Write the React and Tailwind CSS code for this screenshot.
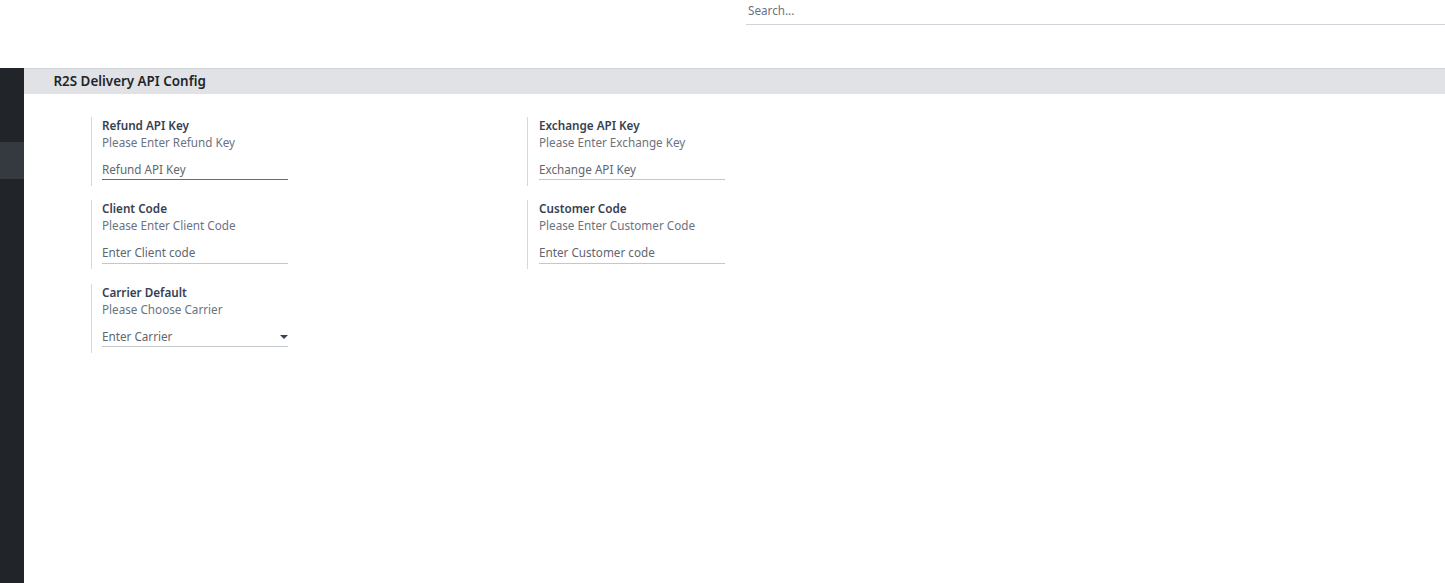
import React from "react";

const Setting = ({ title, help, value, active, select, right }) => {
  return (
    <div className={"w-[436px] h-[69px] border-l border-[#d5d8dc] " + (right ? "pl-[11px]" : "pl-[10px]")}>
      <div className="text-[11.7px] leading-[17px] font-semibold text-[#374151]">{title}</div>
      <div className="text-[11.7px] leading-[17px] text-[#6b7280]">{help}</div>
      <div
        className={
          "relative mt-[11px] w-[186px] h-[18.5px] text-[11.7px] leading-[15px] text-[#5f6670] border-b " +
          (active ? "border-[#1f8a8f]" : "border-[#c4c8cd]")
        }
      >
        {value}
        {select && (
          <span className="absolute right-[0px] top-[6px] border-x-4 border-t-4 border-x-transparent border-t-[#374151]" />
        )}
      </div>
    </div>
  );
};

export default function App() {
  return (
    <div className="h-[583px] overflow-hidden bg-white" style={{ fontFamily: '"Noto Sans", sans-serif' }}>
      <div className="h-[68px] flex justify-end">
        <div className="w-[699px] h-[25px] border-b border-[#ced4da] pl-[2px] text-[11.7px] leading-[21px] text-[#6b7280]">
          Search...
        </div>
      </div>
      <div className="flex h-[515px]">
        <div className="w-[24px] bg-[#212529] pt-[74px]">
          <div className="h-[37px] bg-[#343a40]" />
        </div>
        <div className="flex-1">
          <div className="h-[26px] bg-[#e0e2e6] border-t border-[#ced4da] pl-[29.5px] text-[13.4px] leading-[24px] font-semibold text-[#212529]">
            R2S Delivery API Config
          </div>
          <div className="pl-[67px] pt-[22.5px] grid grid-cols-[436px_436px] gap-y-[14.5px]">
            <Setting title="Refund API Key" help="Please Enter Refund Key" value="Refund API Key" active />
            <Setting title="Exchange API Key" help="Please Enter Exchange Key" value="Exchange API Key" right />
            <Setting title="Client Code" help="Please Enter Client Code" value="Enter Client code" />
            <Setting title="Customer Code" help="Please Enter Customer Code" value="Enter Customer code" right />
            <Setting title="Carrier Default" help="Please Choose Carrier" value="Enter Carrier" select />
          </div>
        </div>
      </div>
    </div>
  );
}
